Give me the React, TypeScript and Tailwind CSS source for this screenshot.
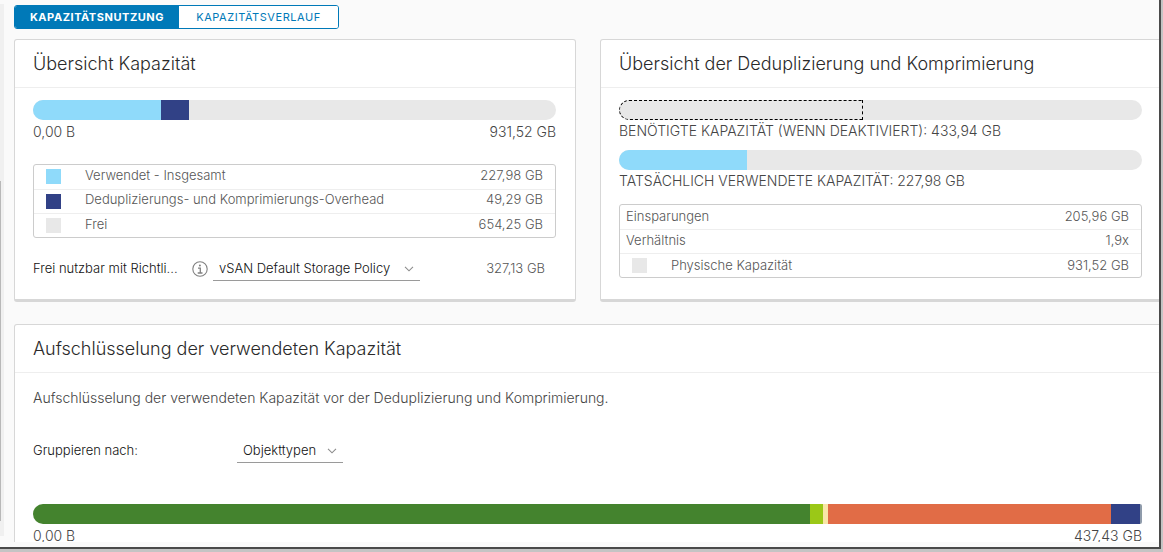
import type { ReactNode } from "react";

type Segment = { name: string; size: number; color: string };

const UNUSED = "bg-[#e8e8e8]";

function Card({ title, children }: { title: string; children: ReactNode }) {
  return (
    <section className="rounded-[3px] border border-b-[3px] border-[#d7d7d7] bg-white">
      <h2 className="flex h-12 items-center border-b border-[#eeeeee] px-[18px] pb-px text-[18px] font-light text-[#2a2a2a]">
        {title}
      </h2>
      <div className="pl-[18px] pr-[19px] pt-3">{children}</div>
    </section>
  );
}

function CapacityBar({ segments, total, label }: { segments: Segment[]; total: number; label: string }) {
  return (
    <div role="img" aria-label={label} className={`flex h-5 overflow-hidden rounded-[10px] ${UNUSED}`}>
      {segments.map((s) => (
        <div key={s.name} className={s.color} style={{ width: `${(s.size / total) * 100}%` }} />
      ))}
    </div>
  );
}

function Scale({ from, to }: { from: string; to: string }) {
  return (
    <div className="flex h-[22px] items-center justify-between text-[14px] font-light text-[#454545]">
      <span>{from}</span>
      <span>{to}</span>
    </div>
  );
}

function Picker({ id, option, width }: { id: string; option: string; width: string }) {
  return (
    <div className={`relative ${width}`}>
      <select
        id={id}
        className="h-6 w-full appearance-none border-b border-[#9a9a9a] bg-transparent pl-[6px] pr-5 text-[13px] font-light text-[#111111] outline-none"
      >
        <option>{option}</option>
      </select>
      <svg
        aria-hidden="true"
        viewBox="0 0 10 6"
        className="pointer-events-none absolute right-[6px] top-[9px] h-[6px] w-[10px]"
        fill="none"
        stroke="#8c8c8c"
        strokeWidth="1.1"
      >
        <path d="M1 0.8 5 4.8 9 0.8" />
      </svg>
    </div>
  );
}

function InfoIcon() {
  return (
    <svg aria-hidden="true" viewBox="0 0 16 16" className="h-4 w-4" fill="none" stroke="#808080">
      <circle cx="8" cy="8" r="7.2" strokeWidth="1.1" />
      <circle cx="7.9" cy="4.4" r="1" fill="#808080" stroke="none" />
      <path d="M6 7.1h2.3v4.7M5.7 12h4.8" strokeWidth="1.3" />
    </svg>
  );
}

const usage: Segment[] = [
  { name: "Verwendet - Insgesamt", size: 227.98, color: "bg-[#8fdafa]" },
  { name: "Deduplizierungs- und Komprimierungs-Overhead", size: 49.29, color: "bg-[#314186]" },
];

const legend = [
  { name: "Verwendet - Insgesamt", value: "227,98 GB", color: "bg-[#8fdafa]" },
  { name: "Deduplizierungs- und Komprimierungs-Overhead", value: "49,29 GB", color: "bg-[#314186]" },
  { name: "Frei", value: "654,25 GB", color: "bg-[#e8e8e8]" },
];

const breakdown: Segment[] = [
  { name: "a", size: 777, color: "bg-[#44832e]" },
  { name: "b", size: 13, color: "bg-[#9bc817]" },
  { name: "c", size: 5, color: "bg-[#f8e6a6]" },
  { name: "d", size: 283, color: "bg-[#e16c46]" },
  { name: "e", size: 29, color: "bg-[#314186]" },
  { name: "f", size: 2, color: "bg-[#8f9bab]" },
];

export default function App() {
  return (
    <div className="h-screen overflow-hidden bg-[#c4c4c4] pb-[3px] pr-[2px] font-['Inter','Liberation_Sans',sans-serif]">
      <div className="flex h-full overflow-hidden border-b-2 border-r-2 border-[#4a4a4a] bg-[#fafafa] pb-[5px]">
        <div className="mb-[6px] mt-1 w-1 shrink-0 bg-[#f0f0f0] pt-[177px]">
          <div className="h-[340px] w-px bg-[#b8b8b8]" />
        </div>
        <main className="min-w-0 flex-1 overflow-hidden pl-[10px] pt-[5px]">
          <div className="-mr-[3px]">
            <div className="flex h-6 w-fit overflow-hidden rounded-[3px] border border-[#0079b8] text-[11px] tracking-wider">
              <button type="button" className="w-[164px] bg-[#0079b8] font-bold text-white">
                KAPAZITÄTSNUTZUNG
              </button>
              <button type="button" className="w-[159px] bg-white text-[#0079b8]">
                KAPAZITÄTSVERLAUF
              </button>
            </div>

            <div className="mt-[10px] grid grid-cols-2 gap-x-6 gap-y-[22px]">
              <Card title="Übersicht Kapazität">
                <CapacityBar segments={usage} total={931.52} label="Kapazität" />
                <Scale from="0,00 B" to="931,52 GB" />
                <div className="mt-[22px] rounded-[3px] border border-[#cccccc]">
                  <table className="w-full text-[13px] font-light text-[#565656]">
                    <tbody className="divide-y divide-[#eeeeee]">
                      {legend.map((row) => (
                        <tr key={row.name} className="h-6">
                          <td className="w-[51px] p-0 pl-3">
                            <div className={`h-[15px] w-[15px] ${row.color}`} />
                          </td>
                          <td className="p-0 pb-[2px]">{row.name}</td>
                          <td className="p-0 pb-[2px] pr-3 text-right">{row.value}</td>
                        </tr>
                      ))}
                    </tbody>
                  </table>
                </div>
                <div className="mb-[18px] mt-[19px] flex h-6 items-center text-[13px]">
                  <label htmlFor="policy" className="w-[159px] truncate font-light text-[#111111]">
                    Frei nutzbar mit Richtli...
                  </label>
                  <InfoIcon />
                  <div className="ml-[5px]">
                    <Picker id="policy" option="vSAN Default Storage Policy" width="w-[207px]" />
                  </div>
                  <span className="ml-auto pr-[11px] font-light text-[#565656]">327,13 GB</span>
                </div>
              </Card>

              <Card title="Übersicht der Deduplizierung und Komprimierung">
                <div className={`h-5 rounded-[10px] ${UNUSED}`}>
                  <div
                    className="h-5 rounded-l-[10px] border border-dashed border-black"
                    style={{ width: `${(433.94 / 931.52) * 100}%` }}
                  />
                </div>
                <p className="h-[30px] pt-px text-[14px] leading-5 font-light text-[#454545]">
                  BENÖTIGTE KAPAZITÄT (WENN DEAKTIVIERT): 433,94 GB
                </p>
                <CapacityBar segments={usage.slice(0, 1)} total={931.52} label="Tatsächlich verwendete Kapazität" />
                <p className="h-[30px] pt-px text-[14px] leading-5 font-light text-[#454545]">
                  TATSÄCHLICH VERWENDETE KAPAZITÄT: 227,98 GB
                </p>
                <div className="mt-1 rounded-[3px] border border-[#cccccc]">
                  <table className="w-full text-[13px] font-light text-[#565656]">
                    <tbody className="divide-y divide-[#eeeeee]">
                      <tr className="h-6">
                        <td className="p-0 pl-[6px]">Einsparungen</td>
                        <td className="p-0 pr-3 text-right">205,96 GB</td>
                      </tr>
                      <tr className="h-6">
                        <td className="p-0 pl-[6px]">Verhältnis</td>
                        <td className="p-0 pr-3 text-right">1,9x</td>
                      </tr>
                      <tr className="h-6">
                        <td className="p-0 pl-3">
                          <div className="flex items-center gap-6">
                            <div className="h-[15px] w-[15px] bg-[#e8e8e8]" />
                            Physische Kapazität
                          </div>
                        </td>
                        <td className="p-0 pr-3 text-right">931,52 GB</td>
                      </tr>
                    </tbody>
                  </table>
                </div>
              </Card>

              <div className="col-span-2">
                <Card title="Aufschlüsselung der verwendeten Kapazität">
                  <p className="flex h-6 items-center text-[14px] font-light text-[#454545]">
                    Aufschlüsselung der verwendeten Kapazität vor der Deduplizierung und Komprimierung.
                  </p>
                  <div className="mt-[30px] flex h-6 items-center text-[13px] font-light text-[#111111]">
                    <label htmlFor="grouping" className="w-[204px]">
                      Gruppieren nach:
                    </label>
                    <Picker id="grouping" option="Objekttypen" width="w-[106px]" />
                  </div>
                  <div className="mt-[41px]">
                    <div
                      role="img"
                      aria-label="Aufschlüsselung"
                      className="flex h-5 overflow-hidden rounded-l-[10px] rounded-r-[2px]"
                    >
                      {breakdown.map((s) => (
                        <div key={s.name} className={s.color} style={{ width: `${(s.size / 1109) * 100}%` }} />
                      ))}
                    </div>
                    <Scale from="0,00 B" to="437,43 GB" />
                  </div>
                </Card>
              </div>
            </div>
          </div>
        </main>
      </div>
    </div>
  );
}
